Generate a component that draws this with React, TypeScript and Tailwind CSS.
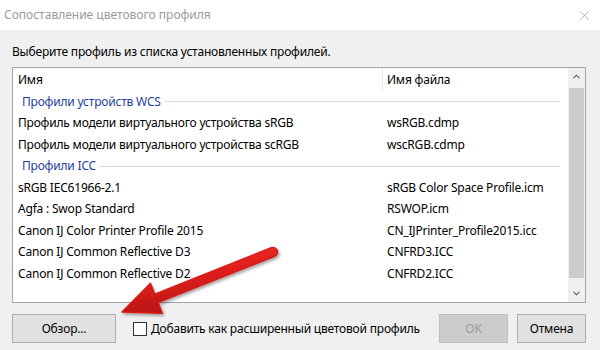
import { ChevronUp, ChevronDown, X } from 'lucide-react';

const font = { fontFamily: '"Noto Sans", "Liberation Sans", sans-serif' };

type Row = { kind: 'group'; label: string } | { kind: 'item'; name: string; file: string };

const rows: Row[] = [
  { kind: 'group', label: 'Профили устройств WCS' },
  { kind: 'item', name: 'Профиль модели виртуального устройства sRGB', file: 'wsRGB.cdmp' },
  { kind: 'item', name: 'Профиль модели виртуального устройства scRGB', file: 'wscRGB.cdmp' },
  { kind: 'group', label: 'Профили ICC' },
  { kind: 'item', name: 'sRGB IEC61966-2.1', file: 'sRGB Color Space Profile.icm' },
  { kind: 'item', name: 'Agfa : Swop Standard', file: 'RSWOP.icm' },
  { kind: 'item', name: 'Canon IJ Color Printer Profile 2015', file: 'CN_IJPrinter_Profile2015.icc' },
  { kind: 'item', name: 'Canon IJ Common Reflective D3', file: 'CNFRD3.ICC' },
  { kind: 'item', name: 'Canon IJ Common Reflective D2', file: 'CNFRD2.ICC' },
];

function RedArrow() {
  return (
    <svg className="absolute inset-0 pointer-events-none" width="600" height="350" viewBox="0 0 600 350">
      <defs>
        <linearGradient id="arrowFill" x1="0" y1="0" x2="0.37" y2="0.93">
          <stop offset="0" stopColor="#f0402f" />
          <stop offset="0.55" stopColor="#e01f1c" />
          <stop offset="1" stopColor="#b81414" />
        </linearGradient>
        <filter id="arrowShadow" x="-10%" y="-20%" width="130%" height="150%">
          <feDropShadow dx="1.5" dy="2" stdDeviation="1.5" floodColor="#000" floodOpacity="0.35" />
        </filter>
      </defs>
      <path
        d="M 154.7 294.1 L 271.3 247.8 A 4.5 4.5 0 0 1 274.7 256.2 L 158.1 302.5 L 162.3 313.2 L 122 312 L 150.5 283.4 Z"
        fill="url(#arrowFill)"
        stroke="#d81c1a"
        strokeWidth="1.5"
        strokeLinejoin="round"
        filter="url(#arrowShadow)"
      />
    </svg>
  );
}

export default function App() {
  return (
    <div className="relative w-[600px] h-[350px] overflow-hidden bg-[#f0f0f0] text-[12px] tracking-[-0.2px] text-black" style={font}>
      {/* title bar */}
      <div className="h-[30px] bg-white flex items-center justify-between pl-[4px] pr-[8px]">
        <span className="text-[12px] tracking-normal text-[#9a9a9a] leading-none">Сопоставление цветового профиля</span>
        <X className="w-[15px] h-[15px] text-[#8a8a8a]" strokeWidth={1} />
      </div>

      <div className="px-[12px]">
        <div className="pt-[14px] leading-[16px]">Выберите профиль из списка установленных профилей.</div>

        {/* list box */}
        <div className="mt-[7px] w-[574px] h-[236px] border border-[#a6a6a6] bg-white flex">
          <div className="flex-1 flex flex-col">
            <div className="h-[23px] flex items-center shrink-0">
              <div className="w-[370px] h-full flex items-center pl-[5px] border-r border-[#e5e5e5]">Имя</div>
              <div className="pl-[4px]">Имя файла</div>
            </div>
            {rows.map((r, i) =>
              r.kind === 'group' ? (
                <div key={i} className="h-[21.5px] flex items-center pl-[9px] pr-[8px] shrink-0">
                  <span className="text-[#1e3f9e]">{r.label}</span>
                  <div className="flex-1 ml-[4px] h-px bg-[#d5d9ea]" />
                </div>
              ) : (
                <div key={i} className="h-[21.5px] flex items-center shrink-0">
                  <div className="w-[370px] pl-[5px] whitespace-nowrap overflow-hidden">{r.name}</div>
                  <div className="pl-[4px] whitespace-nowrap">{r.file}</div>
                </div>
              )
            )}
          </div>

          {/* scrollbar */}
          <div className="w-[17px] bg-[#f0f0f0] flex flex-col items-center">
            <div className="h-[17px] flex items-center justify-center">
              <ChevronUp className="w-[11px] h-[11px] text-[#606060]" strokeWidth={2.5} />
            </div>
            <div className="mt-[3px] w-[15px] h-[190px] bg-[#cdcdcd]" />
            <div className="flex-1" />
            <div className="h-[17px] flex items-center justify-center">
              <ChevronDown className="w-[11px] h-[11px] text-[#606060]" strokeWidth={2.5} />
            </div>
          </div>
        </div>

        {/* bottom row */}
        <div className="mt-[11px] flex items-center">
          <button className="w-[104px] h-[29px] bg-[#e1e1e1] border border-[#adadad] text-black">Обзор...</button>
          <div className="ml-[17px] w-[14px] h-[14px] border border-[#333] bg-white shrink-0" />
          <div className="ml-[4px] w-[280px] whitespace-nowrap">
            Добавить как расширенный цветовой профиль
          </div>
          <button className="ml-[8px] w-[69px] h-[29px] bg-[#cccccc] border border-[#bfbfbf] text-[#9a9a9a]">OK</button>
          <button className="ml-[9px] w-[69px] h-[29px] bg-[#e1e1e1] border border-[#adadad] text-black">Отмена</button>
        </div>
      </div>

      <RedArrow />
    </div>
  );
}
